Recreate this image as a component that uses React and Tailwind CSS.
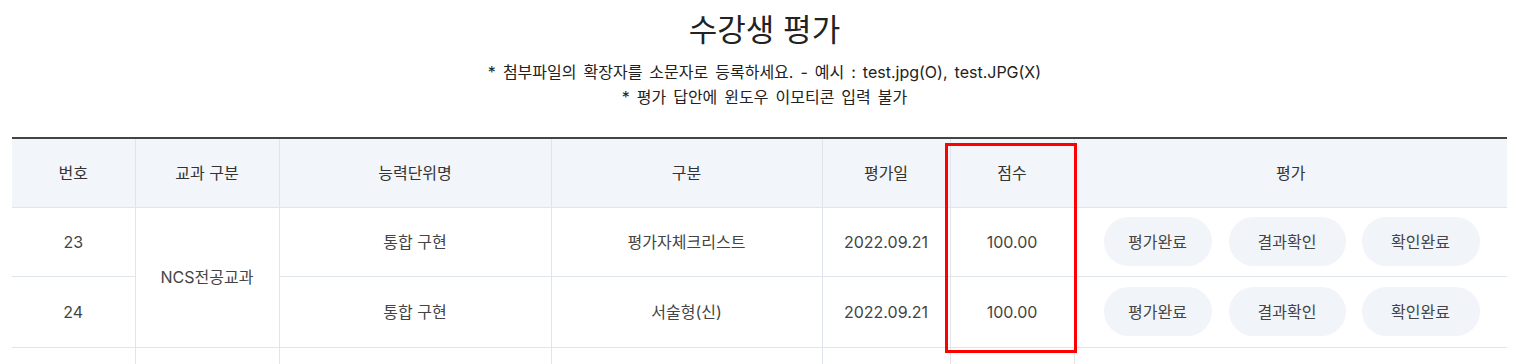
import React from "react";

const rows = [
  { no: "23", unit: "통합 구현", kind: "평가자체크리스트", date: "2022.09.21", score: "100.00", h: "h-[69px]" },
  { no: "24", unit: "통합 구현", kind: "서술형(신)", date: "2022.09.21", score: "100.00", h: "h-[71px]" },
];

const cell = "border border-[#e0e5ed] text-center align-middle";

function Pill({ children, w }) {
  return (
    <button
      type="button"
      className={`h-[49px] ${w} rounded-full bg-[#f1f4f9] text-[16px] text-[#444]`}
    >
      {children}
    </button>
  );
}

export default function App() {
  return (
    <div
      className="relative h-[364px] w-[1529px] overflow-hidden bg-white text-[#333]"
      style={{ fontFamily: 'Inter, "Noto Sans CJK KR", sans-serif' }}
    >
      <h1 className="mt-[10px] text-center text-[31px] font-normal leading-[40px] text-[#222]">
        수강생 평가
      </h1>
      <div className="mt-[10px] text-center text-[16px] leading-[25px] text-[#222] [word-spacing:2.5px]">
        <p>* 첨부파일의 확장자를 소문자로 등록하세요. - 예시 : test.jpg(O), test.JPG(X)</p>
        <p>* 평가 답안에 윈도우 이모티콘 입력 불가</p>
      </div>

      <table className="ml-[12px] mt-[27px] w-[1495px] table-fixed border-collapse border-t-2 border-t-[#444] text-[16px]">
        <colgroup>
          <col className="w-[123px]" />
          <col className="w-[144px]" />
          <col className="w-[272px]" />
          <col className="w-[271px]" />
          <col className="w-[128px]" />
          <col className="w-[124px]" />
          <col className="w-[146px]" />
          <col className="w-[133px]" />
          <col className="w-[154px]" />
        </colgroup>
        <thead>
          <tr className="h-[69px] bg-[#f2f5fa]">
            <th className={`${cell} border-t-0 border-l-0 font-normal text-[#333]`}>번호</th>
            <th className={`${cell} border-t-0 font-normal text-[#333]`}>교과 구분</th>
            <th className={`${cell} border-t-0 font-normal text-[#333]`}>능력단위명</th>
            <th className={`${cell} border-t-0 font-normal text-[#333]`}>구분</th>
            <th className={`${cell} border-t-0 font-normal text-[#333]`}>평가일</th>
            <th className={`${cell} border-t-0 font-normal text-[#333]`}>점수</th>
            <th colSpan={3} className={`${cell} border-t-0 border-r-0 font-normal text-[#333]`}>
              평가
            </th>
          </tr>
        </thead>
        <tbody className="text-[#444]">
          {rows.map((r, i) => (
            <tr key={r.no} className={r.h}>
              <td className={`${cell} border-l-0`}>{r.no}</td>
              {i === 0 && (
                <td rowSpan={2} className={cell}>
                  NCS전공교과
                </td>
              )}
              <td className={cell}>{r.unit}</td>
              <td className={cell}>{r.kind}</td>
              <td className={cell}>{r.date}</td>
              <td className={cell}>{r.score}</td>
              <td className={`${cell} border-r-white`}>
                <div className="flex justify-end pr-[8px]">
                  <Pill w="w-[108px]">평가완료</Pill>
                </div>
              </td>
              <td className={`${cell} border-x-white`}>
                <div className="flex justify-start pl-[8px]">
                  <Pill w="w-[117px]">결과확인</Pill>
                </div>
              </td>
              <td className={`${cell} border-l-white border-r-0`}>
                <div className="flex justify-start pl-[8px]">
                  <Pill w="w-[118px]">확인완료</Pill>
                </div>
              </td>
            </tr>
          ))}
          <tr className="h-[60px]">
            <td className={`${cell} border-l-0`}></td>
            <td className={cell}></td>
            <td className={cell}></td>
            <td className={cell}></td>
            <td className={cell}></td>
            <td className={cell}></td>
            <td className={`${cell} border-r-white`}></td>
            <td className={`${cell} border-x-white`}></td>
            <td className={`${cell} border-l-white border-r-0`}></td>
          </tr>
        </tbody>
      </table>

      <div className="pointer-events-none absolute left-[945px] top-[143px] h-[210px] w-[132px] border-[3px] border-[#ff0000]" />
    </div>
  );
}
